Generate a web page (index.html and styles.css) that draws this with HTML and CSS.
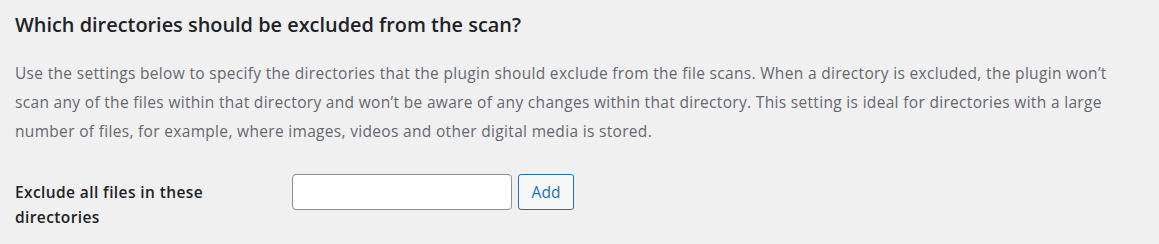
FILE: index.html
```html
<!DOCTYPE html>
<html lang="en">
<head>
<meta charset="utf-8">
<title>Excluded directories</title>
<link rel="stylesheet" href="styles.css">
</head>
<body>
<div class="wrap">
  <h2 class="title">Which directories should be excluded from the scan?</h2>
  <p class="desc">Use the settings below to specify the directories that the plugin should exclude from the file scans. When a directory is excluded, the plugin won’t<br>scan any of the files within that directory and won’t be aware of any changes within that directory. This setting is ideal for directories with a large<br>number of files, for example, where images, videos and other digital media is stored.</p>
  <div class="row">
    <label class="label" for="dir">Exclude all files in these directories</label>
    <div class="field">
      <input class="input" id="dir" type="text">
      <button class="btn" type="button">Add</button>
    </div>
  </div>
</div>
</body>
</html>
```
FILE: styles.css
```css
html, body {
  margin: 0;
  padding: 0;
  background: #f0f0f1;
}
body {
  font-family: "Open Sans", "Noto Sans", sans-serif;
  color: #1d2327;
}
.wrap {
  padding: 12px 15px 0 15px;
}
.title {
  margin: 0;
  font-size: 19.9px;
  line-height: 26px;
  font-weight: 600;
  color: #1d2327;
}
.desc {
  margin: 21px 0 0 0;
  font-size: 15.5px;
  letter-spacing: 0.32px;
  line-height: 29px;
  color: #646970;
  white-space: nowrap;
}
.row {
  display: grid;
  grid-template-columns: 277px auto;
  margin-top: 28px;
}
.label {
  font-size: 15.5px;
  letter-spacing: 0.4px;
  font-weight: 600;
  line-height: 25px;
  padding-top: 6px;
  width: 210px;
  color: #1d2327;
}
.field {
  display: flex;
  gap: 6px;
  align-items: flex-start;
}
.input {
  box-sizing: border-box;
  width: 220px;
  height: 36px;
  border: 1px solid #8c8f94;
  border-radius: 4px;
  background: #fff;
  margin: 0;
  padding: 0 8px;
}
.btn {
  box-sizing: border-box;
  height: 36px;
  width: 56px;
  border: 1px solid #2271b1;
  border-radius: 3px;
  background: #f6f7f7;
  color: #2271b1;
  font-family: inherit;
  font-size: 15.5px;
  margin: 0;
  padding: 0;
}
```
